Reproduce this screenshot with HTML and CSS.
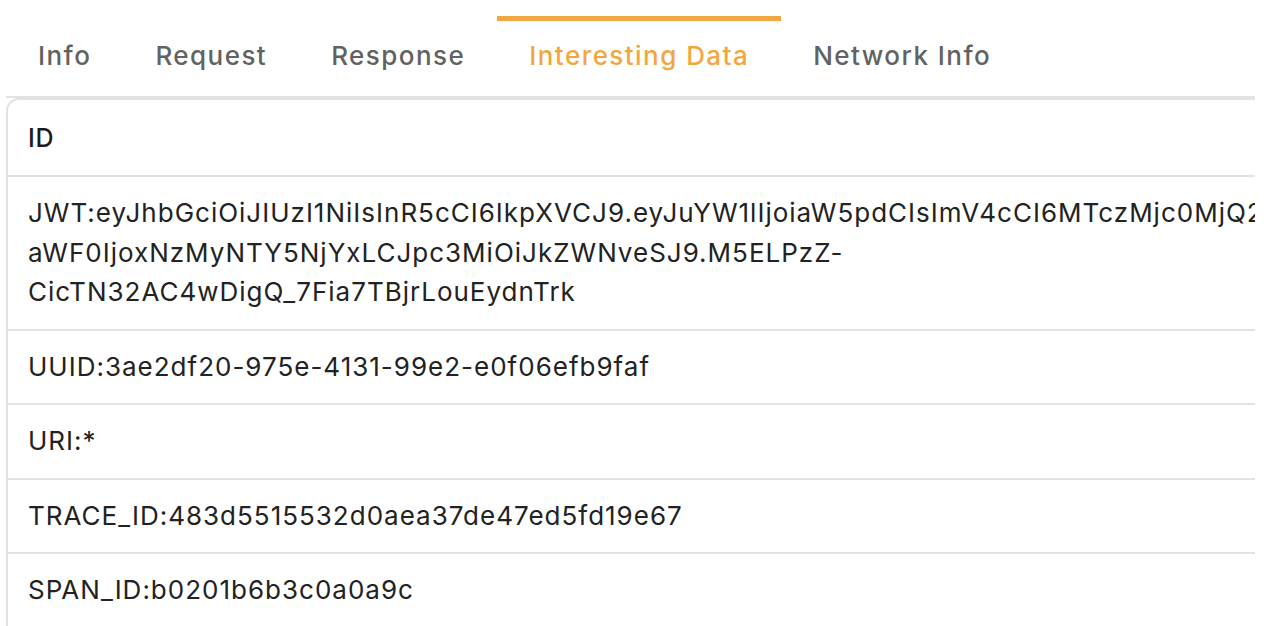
FILE: index.html
```
<!DOCTYPE html>
<html lang="en">
<head>
<meta charset="utf-8">
<title>Interesting Data</title>
<link rel="stylesheet" href="styles.css">
</head>
<body>
<div class="panel">
  <nav class="tabs">
    <div class="tab">Info</div>
    <div class="tab">Request</div>
    <div class="tab">Response</div>
    <div class="tab active">Interesting Data</div>
    <div class="tab">Network Info</div>
  </nav>
  <div class="table">
    <div class="row head">ID</div>
    <div class="row multi">JWT:eyJhbGciOiJIUzI1NiIsInR5cCI6IkpXVCJ9.eyJuYW1lIjoiaW5pdCIsImV4cCI6MTczMjc0MjQ2MSwi<br>aWF0IjoxNzMyNTY5NjYxLCJpc3MiOiJkZWNveSJ9.M5ELPzZ-<br>CicTN32AC4wDigQ_7Fia7TBjrLouEydnTrk</div>
    <div class="row">UUID:3ae2df20-975e-4131-99e2-e0f06efb9faf</div>
    <div class="row">URI:*</div>
    <div class="row">TRACE_ID:483d5515532d0aea37de47ed5fd19e67</div>
    <div class="row">SPAN_ID:b0201b6b3c0a0a9c</div>
  </div>
</div>
</body>
</html>
```
FILE: styles.css
```
html, body {
  margin: 0;
  padding: 0;
  background: #ffffff;
}
body {
  font-family: "Inter", "Liberation Sans", sans-serif;
  color: #222222;
}
.panel {
  margin-left: 6px;
  width: 1249px;
  height: 626px;
  overflow: hidden;
}
.tabs {
  display: flex;
  border-bottom: 2px solid #e2e2e2;
  padding-top: 16px;
}
.tab {
  border-top: 5px solid transparent;
  padding: 15px 32px 20px 32px;
  font-size: 26px;
  line-height: 40px;
  font-weight: 500;
  letter-spacing: 1.45px;
  color: #626262;
  white-space: nowrap;
}
.tab.active {
  border-top-color: #f1a73f;
  color: #f1a73f;
}
.table {
  border-top: 2px solid #e2e2e2;
  border-left: 2px solid #e2e2e2;
  border-top-left-radius: 13px;
}
.row {
  border-bottom: 2px solid #e2e2e2;
  padding: 16px 20px 17px 20px;
  font-size: 26px;
  line-height: 39.5px;
  letter-spacing: 1px;
  white-space: nowrap;
  color: #222222;
}
.row.head {
  padding: 19px 20px 17px 20px;
  line-height: 39px;
  font-size: 25px;
  font-weight: 500;
  letter-spacing: 0.8px;
  color: #1c1c1c;
}
```
